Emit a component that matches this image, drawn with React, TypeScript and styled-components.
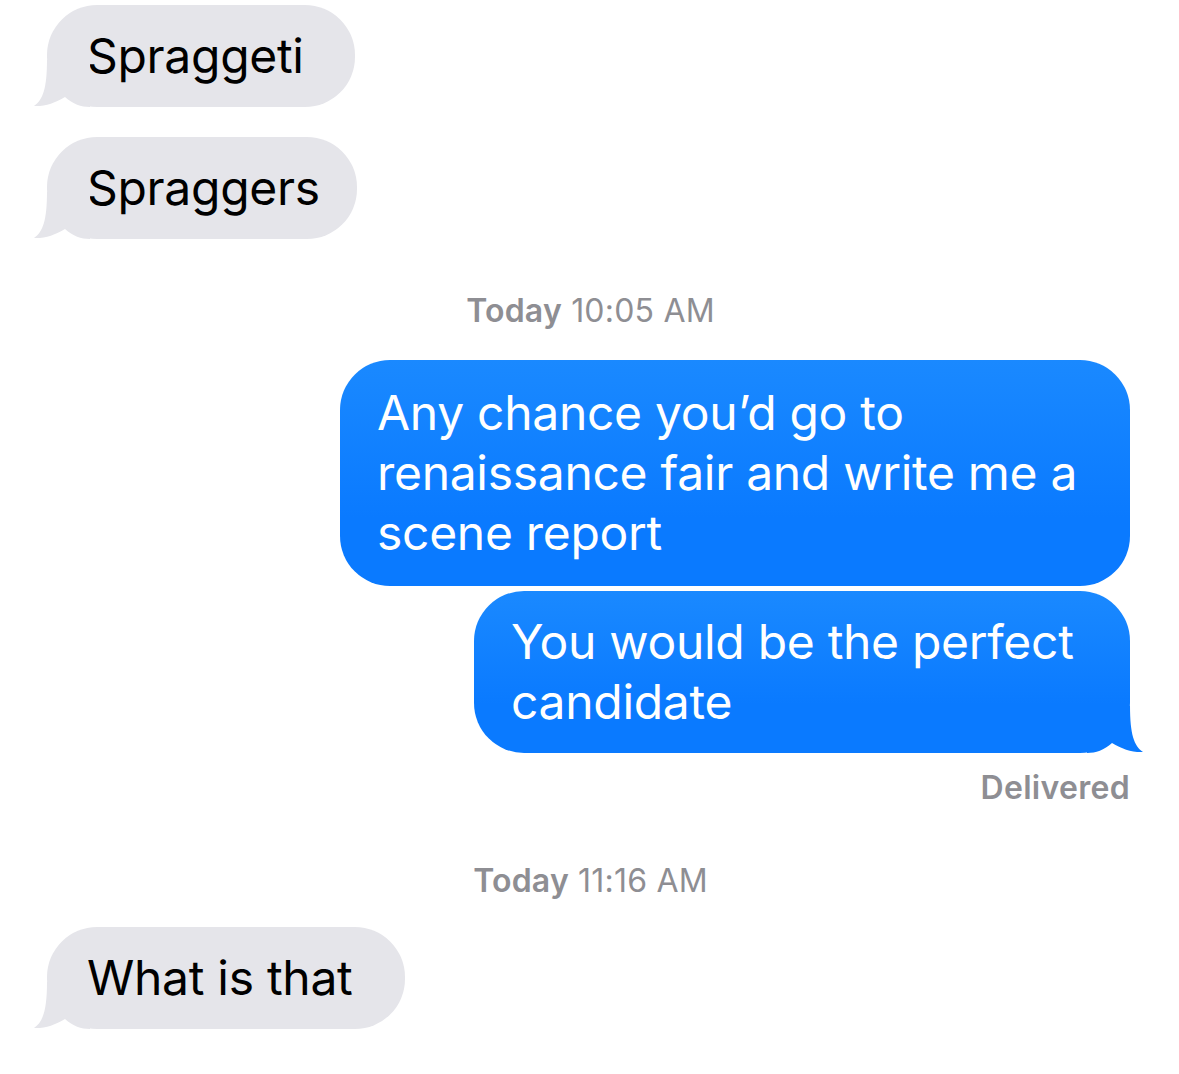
import { createGlobalStyle, styled } from "styled-components";

const GlobalStyle = createGlobalStyle`
  html, body {
    margin: 0;
    padding: 0;
    background: #ffffff;
  }
  body {
    font-family: Inter, "Liberation Sans", sans-serif;
    -webkit-font-smoothing: antialiased;
  }
`;

const Thread = styled.div`
  width: 1179px;
  height: 1074px;
  overflow: hidden;
  display: flex;
  flex-direction: column;
  padding: 5px 49px 0 47px;
  box-sizing: border-box;
`;

const Row = styled.div<{ $side: "left" | "right"; $gap: number }>`
  display: flex;
  justify-content: ${(p) => (p.$side === "left" ? "flex-start" : "flex-end")};
  margin-top: ${(p) => p.$gap}px;
`;

const Bubble = styled.div<{ $sent?: boolean; $w: number; $pad?: number }>`
  position: relative;
  width: ${(p) => p.$w}px;
  box-sizing: border-box;
  padding: ${(p) => p.$pad ?? 21}px 30px ${(p) => p.$pad ?? 21}px
    ${(p) => (p.$sent ? 37 : 40)}px;
  border-radius: 50px;
  font-size: 48px;
  line-height: 60px;
  letter-spacing: -0.3px;
  color: ${(p) => (p.$sent ? "#ffffff" : "#000000")};
  background: ${(p) =>
    p.$sent
      ? "linear-gradient(180deg, #1a89ff 0%, #0a7aff 70%, #0a7aff 100%)"
      : "#e5e5ea"};
`;

const Tail = styled.svg<{ $sent?: boolean }>`
  position: absolute;
  bottom: 0;
  width: 57px;
  height: 47px;
  ${(p) => (p.$sent ? "right: -14px; transform: scaleX(-1);" : "left: -14px;")}
`;

const Stamp = styled.div<{ $gap: number }>`
  margin-top: ${(p) => p.$gap}px;
  text-align: center;
  font-size: 32px;
  line-height: 36px;
  letter-spacing: 0.2px;
  color: #8e8e93;
  padding-left: 4px;
  b {
    font-weight: 600;
  }
`;

const Status = styled.div`
  margin-top: 17px;
  text-align: right;
  font-size: 32px;
  line-height: 36px;
  letter-spacing: 0.3px;
  font-weight: 600;
  color: #8e8e93;
`;

function BubbleTail({ sent, color }: { sent?: boolean; color: string }) {
  return (
    <Tail $sent={sent} viewBox="0 0 57 47">
      <path
        d="M14,0 C14,28 10,40 1,46 C12,46.5 22,43 32,37 C40,44 48,47 57,47 L57,0 Z"
        fill={color}
      />
    </Tail>
  );
}

export default function App() {
  return (
    <>
      <GlobalStyle />
      <Thread>
        <Row $side="left" $gap={0}>
          <Bubble $w={308}>
            Spraggeti
            <BubbleTail color="#e5e5ea" />
          </Bubble>
        </Row>
        <Row $side="left" $gap={30}>
          <Bubble $w={310}>
            Spraggers
            <BubbleTail color="#e5e5ea" />
          </Bubble>
        </Row>
        <Stamp $gap={54}>
          <b>Today</b> 10:05 AM
        </Stamp>
        <Row $side="right" $gap={31}>
          <Bubble $sent $w={790} $pad={23}>
            Any chance you’d go to
            <br />
            renaissance fair and write me a
            <br />
            scene report
          </Bubble>
        </Row>
        <Row $side="right" $gap={5}>
          <Bubble $sent $w={656}>
            You would be the perfect
            <br />
            candidate
            <BubbleTail sent color="#0a7aff" />
          </Bubble>
        </Row>
        <Status>Delivered</Status>
        <Stamp $gap={57}>
          <b>Today</b> 11:16 AM
        </Stamp>
        <Row $side="left" $gap={28}>
          <Bubble $w={358}>
            What is that
            <BubbleTail color="#e5e5ea" />
          </Bubble>
        </Row>
      </Thread>
    </>
  );
}
